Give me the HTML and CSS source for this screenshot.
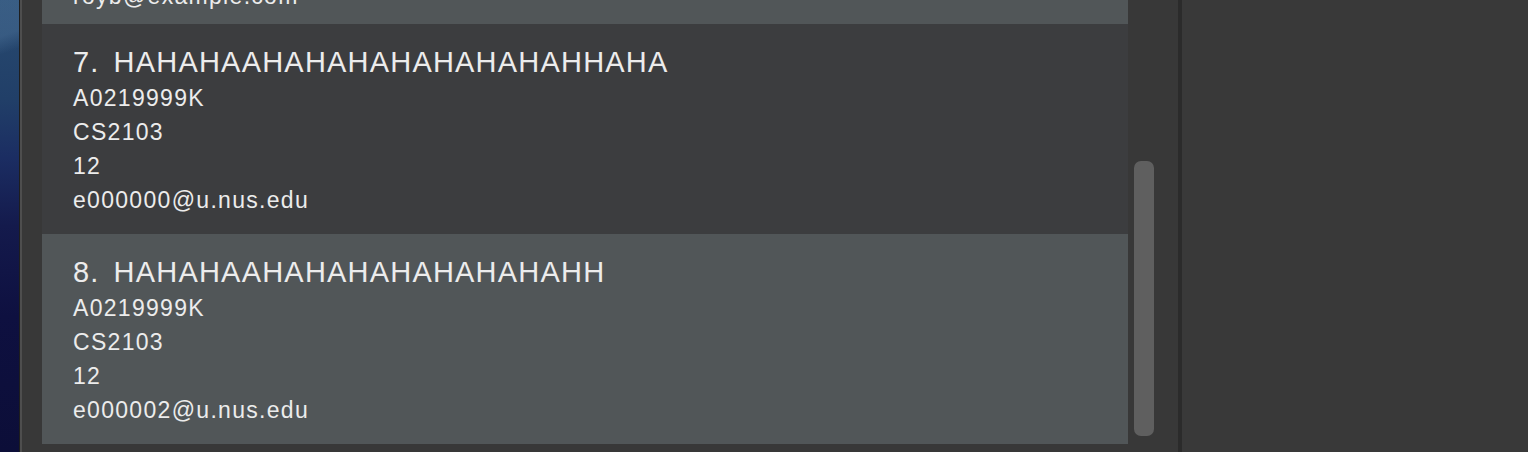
FILE: index.html
```html
<!DOCTYPE html>
<html lang="en">
<head>
<meta charset="utf-8">
<title>Student list</title>
<link rel="stylesheet" href="styles.css">
</head>
<body>
<div class="desktop">
  <div class="wallpaper"></div>
  <div class="window">
    <section class="list-panel">
      <div class="list-viewport">
        <div class="list">
          <article class="card card-even card-cut">
            <div class="line">royb@example.com</div>
          </article>
          <article class="card card-odd">
            <div class="title"><span class="index">7.</span><span class="name">HAHAHAAHAHAHAHAHAHAHAHHAHA</span></div>
            <div class="line">A0219999K</div>
            <div class="line">CS2103</div>
            <div class="line">12</div>
            <div class="line">e000000@u.nus.edu</div>
          </article>
          <article class="card card-even">
            <div class="title"><span class="index">8.</span><span class="name">HAHAHAAHAHAHAHAHAHAHAHH</span></div>
            <div class="line">A0219999K</div>
            <div class="line">CS2103</div>
            <div class="line">12</div>
            <div class="line">e000002@u.nus.edu</div>
          </article>
        </div>
      </div>
      <div class="scrollbar">
        <div class="thumb"></div>
      </div>
    </section>
    <div class="divider"></div>
    <section class="side-panel"></section>
  </div>
</div>
</body>
</html>
```

FILE: styles.css
```css
* { box-sizing: border-box; }
html, body { margin: 0; padding: 0; height: 100%; }
body {
  background: #383838;
  font-family: "Liberation Sans", Arial, sans-serif;
  color: #ececec;
  overflow: hidden;
}
.desktop {
  display: flex;
  height: 452px;
}
.wallpaper {
  width: 20px;
  flex: none;
  background:
    linear-gradient(160deg, rgba(90,130,170,0.35) 0 8%, transparent 12%),
    linear-gradient(180deg, #284a70 0%, #213f68 22%, #1b2d62 35%, #141a4c 50%, #0e1040 70%, #0c0e38 100%);
  border-right: 1px solid #1e1e1e;
}
.window {
  flex: 1;
  display: flex;
  border-left: 2px solid #4e4e4e;
  background: #383838;
}
.list-panel {
  width: 1156px;
  flex: none;
  display: flex;
  padding-left: 20px;
}
.list-viewport {
  width: 1086px;
  flex: none;
  height: 444px;
  overflow: hidden;
}
.list {
  margin-top: -24px;
  display: flex;
  flex-direction: column;
}
.card {
  display: flex;
  flex-direction: column;
  height: 210px;
  padding: 19px 31px 16px;
}
.card-odd { background: #3c3d3f; }
.card-even { background: #515658; }
.card-cut {
  height: 48px;
  justify-content: flex-end;
  padding-bottom: 11px;
}
.title {
  font-size: 29px;
  line-height: 38px;
  height: 38px;
  display: flex;
  gap: 14px;
  letter-spacing: 1.2px;
  white-space: nowrap;
  padding-bottom: 2px;
}
.line {
  font-size: 23px;
  line-height: 34px;
  height: 34px;
  letter-spacing: 1.3px;
  white-space: nowrap;
}
.scrollbar {
  width: 48px;
  flex: none;
  padding: 161px 22px 0 6px;
}
.thumb {
  height: 275px;
  background: #5f5f5f;
  border-radius: 7px;
}
.divider {
  width: 4px;
  flex: none;
  background: #2b2b2b;
}
.side-panel {
  flex: 1;
  background: #393939;
}
```
